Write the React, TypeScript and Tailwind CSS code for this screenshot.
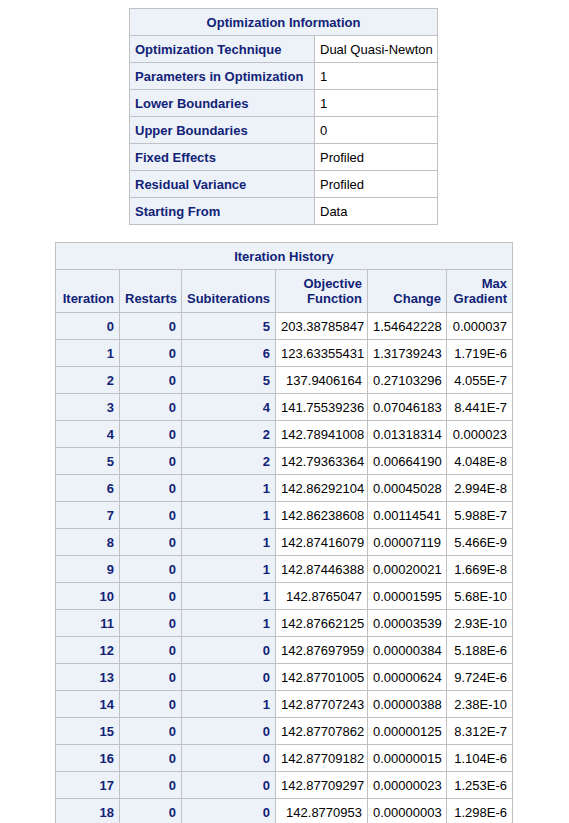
const info = [
  ["Optimization Technique", "Dual Quasi-Newton"],
  ["Parameters in Optimization", "1"],
  ["Lower Boundaries", "1"],
  ["Upper Boundaries", "0"],
  ["Fixed Effects", "Profiled"],
  ["Residual Variance", "Profiled"],
  ["Starting From", "Data"],
];

const hist = [
  [0, 0, 5, "203.38785847", "1.54642228", "0.000037"],
  [1, 0, 6, "123.63355431", "1.31739243", "1.719E-6"],
  [2, 0, 5, "137.9406164", "0.27103296", "4.055E-7"],
  [3, 0, 4, "141.75539236", "0.07046183", "8.441E-7"],
  [4, 0, 2, "142.78941008", "0.01318314", "0.000023"],
  [5, 0, 2, "142.79363364", "0.00664190", "4.048E-8"],
  [6, 0, 1, "142.86292104", "0.00045028", "2.994E-8"],
  [7, 0, 1, "142.86238608", "0.00114541", "5.988E-7"],
  [8, 0, 1, "142.87416079", "0.00007119", "5.466E-9"],
  [9, 0, 1, "142.87446388", "0.00020021", "1.669E-8"],
  [10, 0, 1, "142.8765047", "0.00001595", "5.68E-10"],
  [11, 0, 1, "142.87662125", "0.00003539", "2.93E-10"],
  [12, 0, 0, "142.87697959", "0.00000384", "5.188E-6"],
  [13, 0, 0, "142.87701005", "0.00000624", "9.724E-6"],
  [14, 0, 1, "142.87707243", "0.00000388", "2.38E-10"],
  [15, 0, 0, "142.87707862", "0.00000125", "8.312E-7"],
  [16, 0, 0, "142.87709182", "0.00000015", "1.104E-6"],
  [17, 0, 0, "142.87709297", "0.00000023", "1.253E-6"],
  [18, 0, 0, "142.8770953", "0.00000003", "1.298E-6"],
];

const hd = "bg-[#edf2f9] text-[#112277] font-bold border border-[#c1c1c1] px-[5px] whitespace-nowrap overflow-hidden";
const cell = "bg-white text-black border border-[#c1c1c1] px-[5px] whitespace-nowrap overflow-hidden";

export default function App() {
  return (
    <div className="bg-white min-h-[823px] pt-2 text-[13px] leading-[15px]" style={{ fontFamily: '"Liberation Sans", Arial, sans-serif' }}>
      <table className="table-fixed border-collapse ml-[129px] w-[309px]">
        <colgroup>
          <col className="w-[185px]" />
          <col />
        </colgroup>
        <tbody>
          <tr className="h-[27px]">
            <th colSpan={2} className={`${hd} text-center`}>Optimization Information</th>
          </tr>
          {info.map(([k, v]) => (
            <tr key={k} className="h-[27px]">
              <th className={`${hd} text-left`}>{k}</th>
              <td className={`${cell} text-left`}>{v}</td>
            </tr>
          ))}
        </tbody>
      </table>
      <table className="table-fixed border-collapse ml-[55px] mt-[17px] w-[458px]">
        <colgroup>
          <col className="w-[64px]" />
          <col className="w-[62px]" />
          <col className="w-[94px]" />
          <col className="w-[92px]" />
          <col className="w-[79px]" />
          <col />
        </colgroup>
        <tbody>
          <tr className="h-[27px]">
            <th colSpan={6} className={`${hd} text-center`}>Iteration History</th>
          </tr>
          <tr className="h-[43px]">
            <th className={`${hd} text-right align-bottom pb-[6px]`}>Iteration</th>
            <th className={`${hd} text-right align-bottom pb-[6px]`}>Restarts</th>
            <th className={`${hd} text-right align-bottom pb-[6px]`}>Subiterations</th>
            <th className={`${hd} text-right align-bottom pb-[6px]`}>Objective<br />Function</th>
            <th className={`${hd} text-right align-bottom pb-[6px]`}>Change</th>
            <th className={`${hd} text-right align-bottom pb-[6px]`}>Max<br />Gradient</th>
          </tr>
          {hist.map((r) => (
            <tr key={r[0]} className="h-[27px]">
              <th className={`${hd} text-right`}>{r[0]}</th>
              <th className={`${hd} text-right`}>{r[1]}</th>
              <th className={`${hd} text-right`}>{r[2]}</th>
              <td className={`${cell} text-right`}>{r[3]}</td>
              <td className={`${cell} text-right`}>{r[4]}</td>
              <td className={`${cell} text-right`}>{r[5]}</td>
            </tr>
          ))}
        </tbody>
      </table>
    </div>
  );
}
